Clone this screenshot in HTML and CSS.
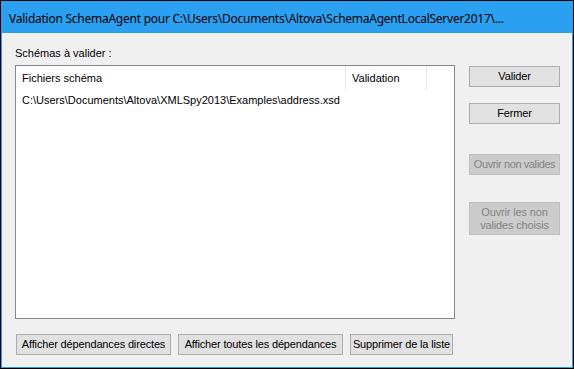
FILE: index.html
```html
<!DOCTYPE html>
<html lang="fr">
<head>
<meta charset="utf-8">
<title>Validation SchemaAgent</title>
<link rel="stylesheet" href="styles.css">
</head>
<body>
<div class="window">
  <div class="frame">
    <div class="titlebar">Validation SchemaAgent pour C:\Users\Documents\Altova\SchemaAgentLocalServer2017\...</div>
    <div class="content">
      <div class="main">
        <div class="left">
          <div class="label">Schémas à valider :</div>
          <div class="list">
            <div class="list-head">
              <div class="col col-file">Fichiers schéma</div>
              <div class="col col-val">Validation</div>
              <div class="col col-rest"></div>
            </div>
            <div class="list-row">C:\Users\Documents\Altova\XMLSpy2013\Examples\address.xsd</div>
          </div>
        </div>
        <div class="right">
          <button class="btn btn-side b-valider">Valider</button>
          <button class="btn btn-side b-fermer">Fermer</button>
          <button class="btn btn-side disabled b-ouvrir" disabled>Ouvrir non valides</button>
          <button class="btn btn-side disabled tall b-choisis" disabled>Ouvrir les non<br>valides choisis</button>
        </div>
      </div>
      <div class="bottom">
        <button class="btn b-direct">Afficher dépendances directes</button>
        <button class="btn b-toutes">Afficher toutes les dépendances</button>
        <button class="btn b-suppr">Supprimer de la liste</button>
      </div>
    </div>
  </div>
</div>
</body>
</html>
```
FILE: styles.css
```css
* { box-sizing: border-box; }
html, body { margin: 0; padding: 0; background: #f0f0f0; }
body { width: 574px; height: 369px; overflow: hidden; }

.window {
  width: 574px;
  height: 369px;
  border: 1px solid #000;
  background: #f0f0f0;
}
.frame {
  height: 100%;
  border: 1px solid #2b9ff0;
  border-top: none;
  display: flex;
  flex-direction: column;
}
.titlebar {
  height: 32px;
  background: #2b9ff0;
  color: #000;
  font-family: "Noto Sans", "DejaVu Sans", sans-serif;
  font-size: 12px;
  line-height: 30px;
  padding-top: 3px;
  padding-left: 8px;
  white-space: nowrap;
  letter-spacing: -0.25px;
  margin: 0 -1px;
}
.content {
  flex: 1;
  display: flex;
  flex-direction: column;
  font-family: "Liberation Sans", Arial, sans-serif;
  font-size: 11px;
  color: #000;
  padding: 13px 0 0 13px;
}
.main {
  display: flex;
  gap: 14px;
}
.left { width: 440px; }
.label {
  height: 14px;
  line-height: 14px;
  margin-bottom: 5px;
}
.list {
  height: 254px;
  background: #fff;
  border: 1px solid #828790;
}
.list-head {
  display: flex;
  height: 24px;
}
.col {
  line-height: 24px;
  padding-left: 6px;
  border-right: 1px solid #e5e5e5;
}
.col-file { width: 330px; }
.col-val { width: 81px; }
.col-rest { flex: 1; border-right: none; }
.list-row {
  padding-left: 6px;
  line-height: 20px;
  white-space: nowrap;
}

.right {
  display: flex;
  flex-direction: column;
  padding-top: 20px;
}
.btn {
  font-family: "Liberation Sans", Arial, sans-serif;
  font-size: 11px;
  letter-spacing: -0.15px;
  color: #000;
  background: #e1e1e1;
  border: 1px solid #adadad;
  height: 21px;
  padding: 0;
  margin: 0;
  line-height: 17px;
  white-space: nowrap;
  text-align: center;
}
.btn-side { width: 91px; }
.b-fermer { margin-top: 16px; }
.b-ouvrir { margin-top: 30px; letter-spacing: -0.4px; }
.b-choisis { margin-top: 27px; }
.btn.tall { height: 33px; line-height: 13px; }
.btn.disabled {
  background: #cccccc;
  border-color: #bfbfbf;
  color: #838383;
}

.bottom {
  display: flex;
  margin-top: 15px;
  padding-left: 1px;
}
.b-direct { width: 155px; }
.b-toutes { width: 165px; margin-left: 7px; }
.b-suppr { width: 103px; margin-left: 7px; }
```
